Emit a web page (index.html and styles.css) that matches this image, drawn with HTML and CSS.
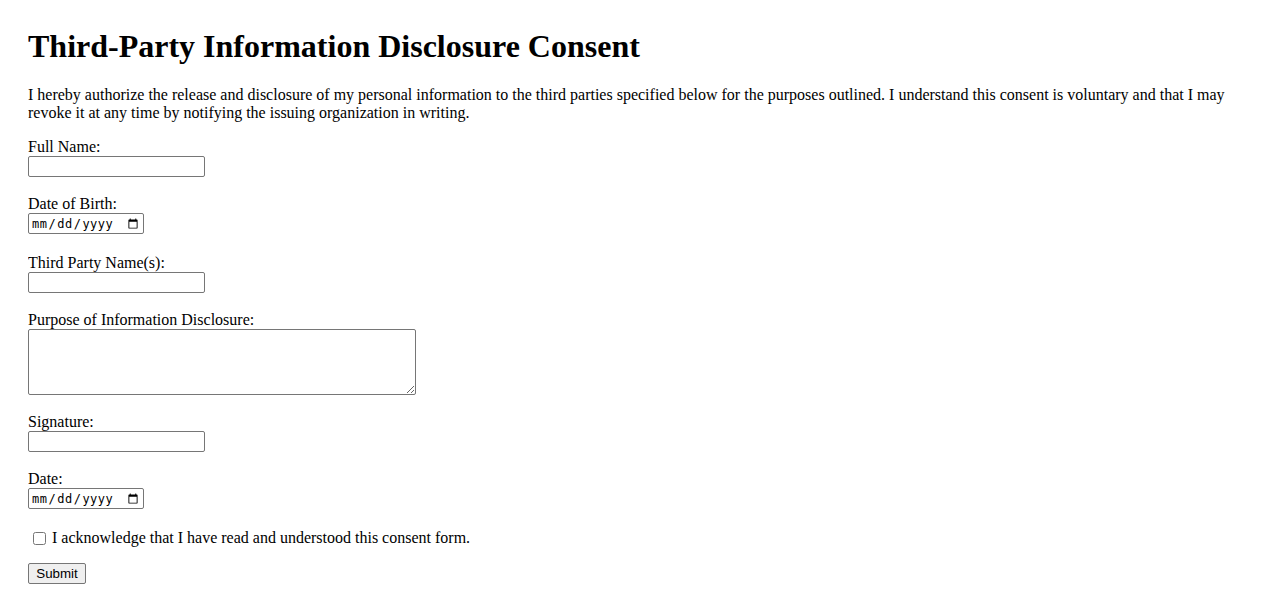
FILE: index.html
```html
<!DOCTYPE HTML>
<html lang="en-US">
<head>
	<meta http-equiv="Content-Type" content="text/html;charset=UTF-8">
	<title>Third-Party Information Disclosure Consent</title>
	<link rel="stylesheet" href="styles.css">
</head>
<body>
	<h1>Third-Party Information Disclosure Consent</h1>
	<p class="intro">I hereby authorize the release and disclosure of my personal information to the third parties specified below for the purposes outlined. I understand this consent is voluntary and that I may revoke it at any time by notifying the issuing organization in writing.</p>
	<form class="consent" onsubmit="return false;">
		<div class="field">
			<label for="full-name">Full Name:</label>
			<input type="text" id="full-name" name="fullName" class="text">
		</div>
		<div class="field field-wide-gap">
			<label for="dob">Date of Birth:</label>
			<input type="date" id="dob" name="dob" class="date">
		</div>
		<div class="field">
			<label for="third-party">Third Party Name(s):</label>
			<input type="text" id="third-party" name="thirdParty" class="text">
		</div>
		<div class="field">
			<label for="purpose">Purpose of Information Disclosure:</label>
			<textarea id="purpose" name="purpose" class="area"></textarea>
		</div>
		<div class="field">
			<label for="signature">Signature:</label>
			<input type="text" id="signature" name="signature" class="text">
		</div>
		<div class="field">
			<label for="sign-date">Date:</label>
			<input type="date" id="sign-date" name="signDate" class="date">
		</div>
		<div class="check">
			<input type="checkbox" id="ack" name="ack">
			<label for="ack">I acknowledge that I have read and understood this consent form.</label>
		</div>
		<button type="submit" class="submit">Submit</button>
	</form>
</body>
</html>
```

FILE: styles.css
```css
body{
	margin: 28px;
	font-family: "Liberation Serif", "Times New Roman", serif;
	font-size: 16px;
	color: #000;
	background-color: #fff;
}
h1{
	font-size: 32px;
	margin: 0 0 21px;
}
.intro{
	margin: 0 0 16px;
}
.field{
	display: flex;
	flex-direction: column;
	align-items: flex-start;
	margin-bottom: 18px;
}
.field-wide-gap{
	margin-bottom: 20px;
}
.text,.date,.area{
	box-sizing: border-box;
	margin: 0;
	border: 1px solid #767676;
	border-radius: 2px;
	background: #fff;
}
.text{
	width: 177px;
	height: 21px;
	padding: 1px 2px;
}
.date{
	width: 116px;
	height: 21px;
	padding: 1px 2px;
	font-family: "DejaVu Sans Mono", monospace;
	font-size: 12px;
	letter-spacing: 0.5px;
}
.area{
	width: 388px;
	height: 66px;
	padding: 2px;
}
.check{
	display: flex;
	align-items: center;
	margin: 20px 0 16px;
}
.check input{
	margin: 0 7px 0 5px;
	width: 13px;
	height: 13px;
}
.check label{
	position: relative;
	left: -1px;
}
.submit{
	box-sizing: border-box;
	height: 21px;
	width: 58px;
	padding: 1px 6px;
	font-family: "Liberation Sans", Arial, sans-serif;
	font-size: 13.33px;
	border: 1px solid #767676;
	border-radius: 2px;
	background: #efefef;
	color: #000;
}
```
